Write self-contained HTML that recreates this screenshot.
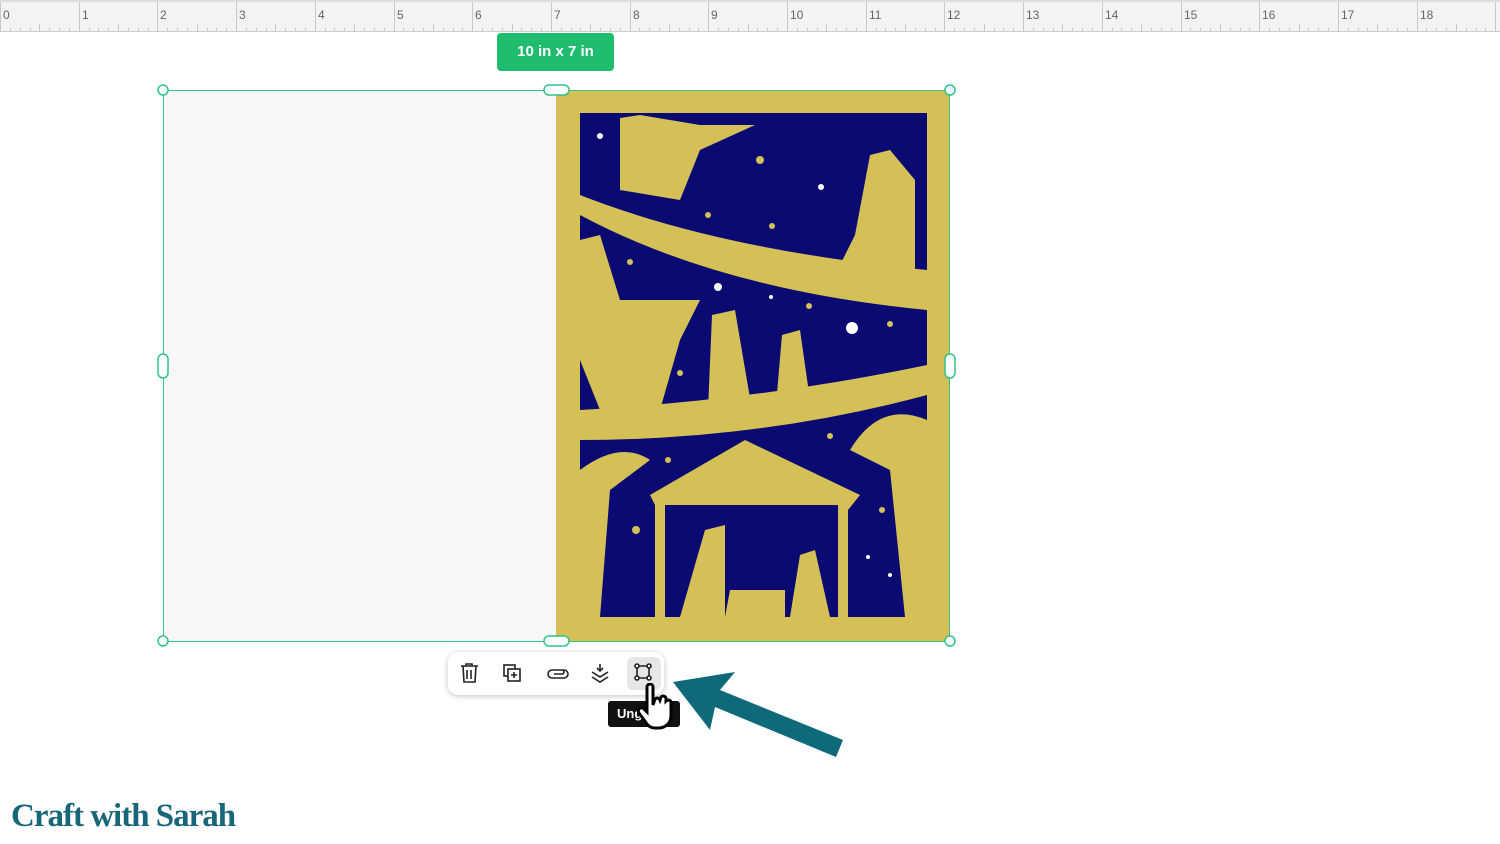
<!DOCTYPE html>
<html><head><style>
body{margin:0;width:1500px;height:844px;background:#fff;position:relative;overflow:hidden;font-family:"Liberation Sans",sans-serif}
#ruler{position:absolute;left:0;top:0;width:1500px;height:29px;background:#f3f3f3;border-top:2px solid #ddd;border-bottom:1px solid #ccc}
.n{position:absolute;top:6px;font-size:12px;color:#666}
</style></head><body>
<div id="ruler">
<svg width="1500" height="29" style="position:absolute;left:0;top:0">
<g stroke="#c8c8c8" stroke-width="1" id="t"></g>
</svg>
</div>
<script>
var g=document.getElementById('t'),r=document.getElementById('ruler');
for(var i=0;i<=19*8;i++){var x=Math.round(i*78.7/8)+0.5;var h=i%8==0?29:(i%4==0?7:3);
var l=document.createElementNS('http://www.w3.org/2000/svg','line');l.setAttribute('x1',x);l.setAttribute('x2',x);l.setAttribute('y1',29-h);l.setAttribute('y2',29);g.appendChild(l);}
for(var k=0;k<19;k++){var d=document.createElement('div');d.className='n';d.style.left=(Math.round(k*78.7)+3)+'px';d.textContent=k;r.appendChild(d);}
</script>
<div style="position:absolute;left:497px;top:33px;width:117px;height:38px;background:#1dbd6d;border-radius:4px;color:#fff;font-weight:bold;font-size:15px;line-height:38px;text-align:center">10 in x 7 in</div>
<svg width="1500" height="844" style="position:absolute;left:0;top:0">
<rect x="163" y="90" width="393" height="551" fill="#f7f7f7"/>
<rect x="556" y="90" width="394" height="551" fill="#d5c057"/>
<rect x="580" y="113" width="347" height="504" fill="#0a0a72"/>
<path d="M580 195 Q720 250 927 270 L927 310 Q720 290 580 215Z" fill="#d5c057"/>
<path d="M580 410 Q760 400 927 365 L927 395 Q760 440 580 440Z" fill="#d5c057"/>
<path d="M620 118 L640 115 L700 125 L755 125 L700 150 L680 200 L620 190Z" fill="#d5c057"/>
<path d="M870 155 L890 150 L915 180 L915 270 L840 265 L855 235Z" fill="#d5c057"/>
<path d="M580 240 L600 235 L620 300 L660 300 L700 300 L680 340 L660 410 L600 410 L580 360Z" fill="#d5c057"/>
<path d="M712 315 L735 310 L752 410 L708 410Z" fill="#d5c057"/>
<path d="M782 335 L800 330 L810 400 L776 405Z" fill="#d5c057"/>
<path d="M650 495 L745 440 L860 495 L848 510 L848 617 L838 617 L838 505 L665 505 L665 617 L655 617 L655 505Z" fill="#d5c057"/>
<path d="M680 617 L705 530 L725 525 L725 617Z M790 617 L800 555 L815 550 L830 617Z M725 617 L730 590 L785 590 L785 617Z" fill="#d5c057"/>
<path d="M580 470 Q620 440 650 460 L610 490 L600 617 L580 617Z M927 420 Q880 400 850 450 L890 470 L905 617 L927 617Z" fill="#d5c057"/>
<g fill="#d5c057"><circle cx="760" cy="160" r="4"/><circle cx="708" cy="215" r="3"/><circle cx="772" cy="226" r="3"/><circle cx="630" cy="262" r="3"/><circle cx="890" cy="324" r="3"/><circle cx="680" cy="373" r="3"/><circle cx="668" cy="460" r="3"/><circle cx="636" cy="530" r="4"/><circle cx="598" cy="547" r="3"/><circle cx="882" cy="510" r="3"/><circle cx="830" cy="436" r="3"/><circle cx="809" cy="306" r="3"/></g>
<g fill="#fff"><circle cx="852" cy="328" r="6"/><circle cx="600" cy="136" r="3"/><circle cx="718" cy="287" r="4"/><circle cx="821" cy="187" r="3"/><circle cx="771" cy="297" r="2"/><circle cx="890" cy="575" r="2"/><circle cx="868" cy="557" r="2"/></g>
<rect x="163.5" y="90.5" width="786" height="551" fill="none" stroke="#2fc48a" stroke-width="1"/>
<g fill="#fff" stroke="#2fc48a" stroke-width="1.5">
<circle cx="163" cy="90" r="5"/><circle cx="950" cy="90" r="5"/><circle cx="163" cy="641" r="5"/><circle cx="950" cy="641" r="5"/>
<rect x="544" y="85" width="25" height="10" rx="5"/><rect x="544" y="636" width="25" height="10" rx="5"/>
<rect x="158" y="354" width="10" height="24" rx="5"/><rect x="945" y="354" width="10" height="24" rx="5"/>
</g>
<path d="M843 740 L720 690 L735 672 L673 682 L710 730 L715 707 L836 757Z" fill="#0e6a7a"/>
</svg>
<div style="position:absolute;left:448px;top:652px;width:216px;height:43px;background:#fff;border-radius:10px;box-shadow:0 1px 6px rgba(0,0,0,.25)"></div>
<div style="position:absolute;left:627px;top:657px;width:34px;height:33px;background:#e6e6e6;border-radius:6px"></div>
<svg width="1500" height="844" style="position:absolute;left:0;top:0" fill="none" stroke="#222" stroke-width="1.6">
<path d="M461 666h17M466 666v-2h6v2M463 666l1 16h11l1-16M467 670v9M471 670v9"/>
<rect x="504" y="665" width="11" height="11"/><rect x="508" y="669" width="12" height="12" fill="#fff"/><path d="M514 672v6M511 675h6"/>
<path d="M556 670h8a4 4 0 0 1 0 8h-12a4 4 0 0 1 0-8h10a2 2 0 0 1 0 4h-8"/>
<path d="M600 664v7M597 668l3 3 3-3M592 672l8 5 8-5M592 677l8 5 8-5"/>
<path d="M637 666h12M637 666v12M649 666v12M637 678h12"/><g fill="#fff"><circle cx="637" cy="666" r="2"/><circle cx="649" cy="666" r="2"/><circle cx="637" cy="678" r="2"/><circle cx="649" cy="678" r="2"/></g>
</svg>
<div style="position:absolute;left:608px;top:701px;width:72px;height:26px;background:#111;border-radius:3px;color:#fff;font-size:13px;font-weight:bold;line-height:26px;padding-left:9px;box-sizing:border-box">Ung</div>
<svg width="40" height="50" style="position:absolute;left:635px;top:683px"><path d="M12 4a3 3 0 0 1 6 0v18l2-6a3 3 0 0 1 5 1l1-3a3 3 0 0 1 5 1l0 3a3 3 0 0 1 5 1v14a12 12 0 0 1-12 12h-4a10 10 0 0 1-8-4l-8-11a3 3 0 0 1 5-4l3 3Z" fill="#fff" stroke="#000" stroke-width="3"/></svg>
<div style="position:absolute;left:11px;top:798px;font-family:'Liberation Serif',serif;font-size:33px;font-weight:bold;color:#17667a;letter-spacing:-1px">Craft with Sarah</div>
</body></html>
